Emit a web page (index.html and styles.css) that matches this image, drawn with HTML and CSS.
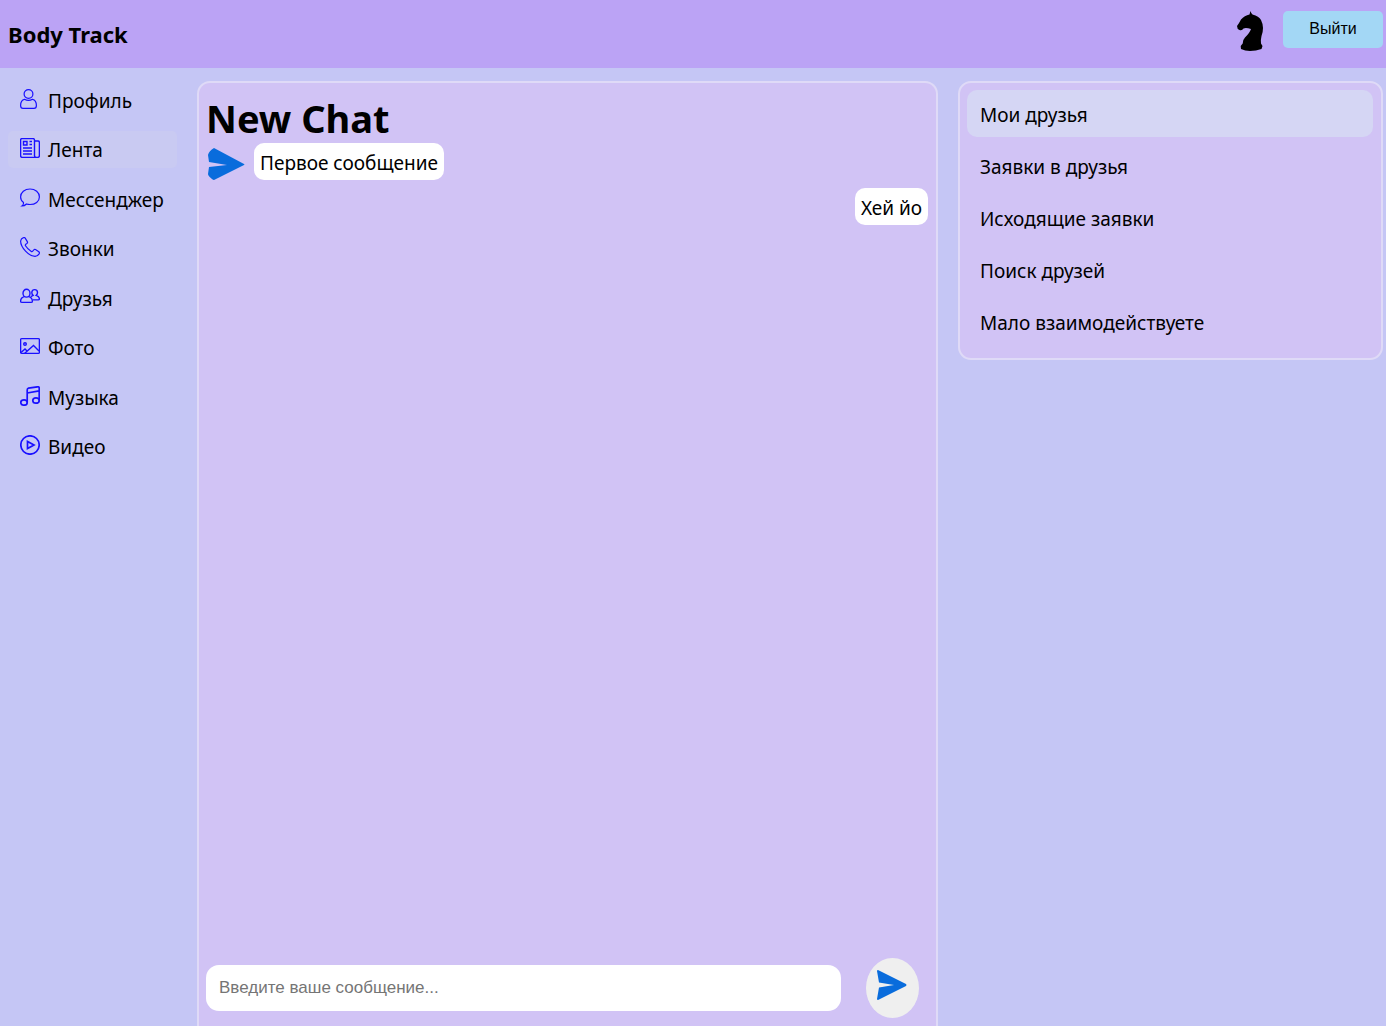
FILE: index.html
```html
<!DOCTYPE html>
<html lang="ru">
<head>
<meta charset="utf-8">
<meta name="viewport" content="width=device-width, initial-scale=1">
<title>Body Track</title>
<link rel="stylesheet" href="styles.css">
</head>
<body>
<header class="header">
  <a class="brand" href="#">Body Track</a>
  <div class="account">
    <svg class="avatar" viewBox="0 0 26 40" aria-hidden="true"><path d="M13.500 0Q14 2 15.500 3.500Q22 5 24 9Q26 13 26 17Q26 21 24.500 25Q23.500 29 24 32.500L25.500 35L24.500 38Q19 40 13 40Q8 40 4 38L3.700 35L5.700 32.500Q5.500 29 8 26.500Q13 21.500 14 18Q9 16.500 6.500 17.500Q5 20 2.500 19Q0 18 0 15Q2.500 11.500 4 8.500Q7.500 4.500 12.500 3.500Z"/></svg>
    <button class="logout" type="button">Выйти</button>
  </div>
</header>
<div class="layout">
  <nav class="menu" aria-label="Меню">
    <a class="menu-link" href="#"><svg class="icon medium" viewBox="0 0 20 20"><circle cx="8.500" cy="5" r="4.400"/><path d="M4.500 10.300C2 10.800 .6 13 .6 16.500Q.6 19.400 3 19.400H14Q16.400 19.400 16.400 16.500C16.400 13 15 10.800 12.500 10.300Q8.500 12.500 4.500 10.300Z"/></svg>Профиль</a>
    <a class="menu-link active" href="#"><svg class="icon bold" viewBox="0 0 20 20"><path d="M14.500 18V2Q14.500.6 13 .6H2Q.6.6 .6 2V17.500Q.6 19.400 2.500 19.400H17.500Q19.400 19.400 19.400 17.500V4.500Q19.400 3 18 3H14.500M14.500 17.500Q14.500 19.400 16.500 19.400M3.500 3.500H7V7H3.500ZM9.500 3.500H12M9.500 6.500H12M3 10H12M3 13H12M3 16H12"/></svg>Лента</a>
    <a class="menu-link" href="#"><svg class="icon medium" viewBox="0 0 20 20"><path d="M3.500 14.500C1.500 13 .6 11 .6 9C.6 4.500 4.700 1 10 1S19.400 4.500 19.400 9S15.300 16.500 10 16.500Q8 16.500 6.500 16Q4.500 18 2 18Q4 16.500 3.500 14.500Z"/></svg>Мессенджер</a>
    <a class="menu-link" href="#"><svg class="icon medium" viewBox="0 0 20 20"><path d="M3.500.6Q1 1.500 .6 4C.6 10.500 9 19.400 15 19.400Q18 19.300 19.300 16.500Q19.700 15.500 18.800 14.700L15.500 12.600Q14.500 12 13.700 13L12.700 14.200Q12 15 11 14.200Q7.500 12 5.500 8.800Q5 8 5.800 7.300L7 6.400Q7.900 5.600 7.300 4.600L5.200 1.200Q4.500 .2 3.500 .6Z"/></svg>Звонки</a>
    <a class="menu-link" href="#"><svg class="icon bold" viewBox="0 0 20 20"><ellipse cx="6.500" cy="6.200" rx="3.500" ry="3.900"/><path d="M4.300 9.700Q.6 10.800 .6 14.200Q.6 15.400 2 15.400H11Q12.400 15.400 12.400 14.200Q12.400 10.800 8.700 9.700M11.800 5.500C11.800 1.700 17.500 1.700 17.500 5.500Q17.500 7.300 16.200 8.400Q19.400 9.500 19.400 11.800Q19.400 12.900 18.300 12.900H13M11.800 5.500Q11.800 7.300 13.100 8.400L10.800 9.500"/></svg>Друзья</a>
    <a class="menu-link" href="#"><svg class="icon bold" viewBox="0 0 20 20"><rect x=".6" y="2.600" width="18.800" height="14.800" rx="1"/><circle cx="5" cy="8" r="1.300"/><path d="M1 16.500L5 13L7 15M4.500 17.500L13.500 9.500L19 15"/></svg>Фото</a>
    <a class="menu-link" href="#"><svg class="icon heavy" viewBox="0 0 20 20"><ellipse cx="4" cy="16.500" rx="3.200" ry="2.700"/><ellipse cx="16" cy="14.500" rx="3.200" ry="2.700"/><path d="M7.200 16.500V4Q7.200 2.500 8.500 2.200L17.500 .8Q19.200 .6 19.200 2V14.500M7.200 7L19.200 4.800"/></svg>Музыка</a>
    <a class="menu-link" href="#"><svg class="icon heavy" viewBox="0 0 20 20"><circle cx="10" cy="10" r="9.200"/><path d="M7.500 6.500V13.500L14 10Z"/></svg>Видео</a>
  </nav>
  <main class="chat">
    <h1 class="chat-title">New Chat</h1>
    <div class="messages">
      <div class="message">
        <svg class="sender" viewBox="0 0 38 32" aria-hidden="true"><path d="M7 0L37 16Q38 16.500 37 17L7 32Q6 32 5 31Q1 28 1 26L2 19L20 17L2 14L1 7Q2 3 7 0Z"/></svg>
        <p class="bubble">Первое сообщение</p>
      </div>
      <div class="message own"><p class="bubble">Хей йо</p></div>
    </div>
    <form class="composer">
      <input class="composer-input" type="text" aria-label="Сообщение" placeholder="Введите ваше сообщение...">
      <button class="send" type="button" aria-label="Отправить"><svg class="send-icon" viewBox="0 0 30 30"><path d="M1 0L29 14Q30 15 29 16L1 30Q0 30 0 29L2 17.500L17 15L2 12.500L0 1Q0 0 1 0Z"/></svg></button>
    </form>
  </main>
  <nav class="friends" aria-label="Друзья">
    <a class="friends-link current" href="#">Мои друзья</a>
    <a class="friends-link" href="#">Заявки в друзья</a>
    <a class="friends-link" href="#">Исходящие заявки</a>
    <a class="friends-link" href="#">Поиск друзей</a>
    <a class="friends-link" href="#">Мало взаимодействуете</a>
  </nav>
</div>
</body>
</html>
```
FILE: styles.css
```css
* { box-sizing: border-box; }

body {
  display: flex;
  flex-direction: column;
  height: 100vh;
  margin: 0;
  overflow: hidden;
  background: #c5c6f5;
  color: #000;
  font: 19px/28px "Segoe UI", "Noto Sans", sans-serif;
}

a { color: inherit; text-decoration: none; }

.header {
  display: flex;
  justify-content: space-between;
  flex: none;
  height: 68px;
  padding: 11px 3px 0 8px;
  background: #bba3f5;
}

.brand {
  padding-top: 9px;
  font-size: 22px;
  font-weight: 700;
}

.account {
  display: flex;
  align-items: flex-start;
  gap: 20px;
}

.avatar { width: 26px; height: 40px; }

.logout {
  width: 100px;
  height: 37px;
  padding: 0 0 2px;
  border: 0;
  border-radius: 5px;
  background: #a3d7f5;
  color: #000;
  font: 16px "Liberation Sans", Arial, sans-serif;
}

.layout {
  display: grid;
  grid-template-columns: 169px minmax(0, 741fr) minmax(0, 425fr);
  gap: 20px;
  flex: 1;
  min-height: 0;
  padding: 13px 3px 0 8px;
}

.menu {
  display: flex;
  flex-direction: column;
  justify-content: space-between;
  height: 384px;
}

.menu-link {
  display: flex;
  align-items: center;
  gap: 8px;
  height: 37px;
  padding: 2px 0 0 12px;
  border-radius: 5px;
}

.active { background: #c9caf2; }

.icon {
  width: 20px;
  height: 20px;
  margin-bottom: 4px;
  fill: none;
  stroke: #1a10ff;
}

.medium { stroke-width: 1.2; }
.bold { stroke-width: 1.4; }
.heavy { stroke-width: 1.7; }

.chat, .friends {
  border: 2px solid #dfdaf7;
  border-radius: 13px;
  background: #d1c3f5;
}

.chat {
  display: flex;
  flex-direction: column;
  padding: 8px 8px 8px 7px;
  border-bottom: 0;
  border-radius: 13px 13px 0 0;
}

.chat-title {
  margin: 0;
  padding-top: 2px;
  font-size: 38px;
  line-height: 50px;
}

.messages {
  display: flex;
  flex-direction: column;
  gap: 8px;
  flex: 1;
}

.message {
  display: flex;
  align-items: flex-start;
  gap: 8px;
}

.own { justify-content: flex-end; }

.sender {
  width: 40px;
  height: 32px;
  margin-top: 5px;
  fill: #096cdc;
}

.bubble {
  margin: 0;
  padding: 6px 6px 3px;
  border-radius: 10px;
  background: #fff;
}

.composer {
  display: flex;
  align-items: center;
  gap: 25px;
  padding-right: 9px;
}

.composer-input {
  flex: 1;
  min-width: 0;
  height: 46px;
  padding: 0 13px;
  border: 0;
  border-radius: 13px;
  background: #fff;
  font: 17px "Liberation Sans", Arial, sans-serif;
}

.composer-input::placeholder { color: #757575; }

.send {
  display: grid;
  place-items: center;
  width: 53px;
  height: 60px;
  padding: 0 1px 6px 0;
  border: 0;
  border-radius: 50%;
  background: #efefef;
}

.send-icon { width: 30px; height: 30px; fill: #096cdc; }

.friends {
  display: flex;
  flex-direction: column;
  gap: 5px;
  align-self: start;
  padding: 7px 8px 13px 7px;
}

.friends-link {
  height: 47px;
  padding: 11px 13px 8px;
  border-radius: 10px;
}

.current { background: #d5d6f4; }
```
